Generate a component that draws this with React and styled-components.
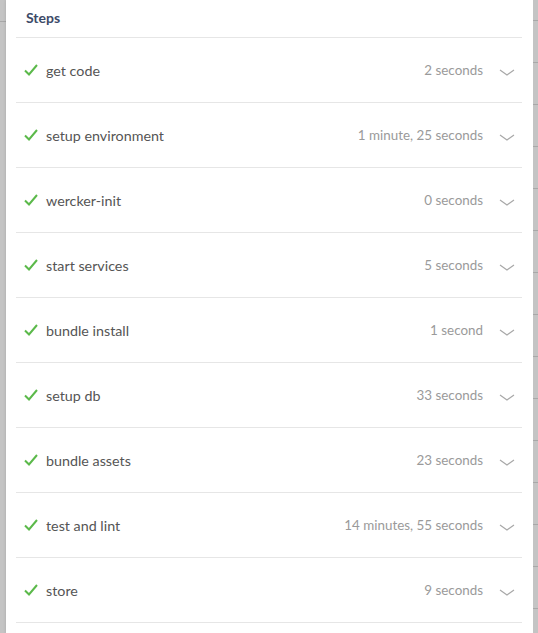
import React from "react";
import styled, { createGlobalStyle } from "styled-components";

const GlobalStyle = createGlobalStyle`
  html, body {
    margin: 0;
    padding: 0;
    background: #c4c4c4;
    font-family: Lato, "Open Sans", "Liberation Sans", sans-serif;
  }
`;

const Page = styled.div`
  display: flex;
  width: 538px;
  height: 633px;
  overflow: hidden;
  background: #c2c2c2;
`;

const SideStrip = styled.div`
  width: ${(p) => p.width}px;
  flex-shrink: 0;
  background-color: #c4c4c4;
  background-image: ${(p) =>
    p.lines
      ? "repeating-linear-gradient(to bottom, transparent 0 20px, #a8a8a8 20px 21px, transparent 21px 42px)"
      : "linear-gradient(to bottom, transparent 0 21px, #a8a8a8 21px 22px, transparent 22px)"};
`;

const Panel = styled.div`
  flex: 1;
  background: #fff;
  padding: 0 11px 0 10px;
  box-shadow: 0 0 3px rgba(0, 0, 0, 0.15);
`;

const Header = styled.h2`
  margin: 0;
  height: 38px;
  box-sizing: border-box;
  padding: 9px 0 0 10px;
  font-size: 14px;
  font-weight: 700;
  color: #3c4a68;
  border-bottom: 1px solid #e6e6e6;
`;

const Row = styled.div`
  display: flex;
  align-items: center;
  height: 65px;
  box-sizing: border-box;
  padding: 0 7px 0 8px;
  border-bottom: 1px solid #e6e6e6;
`;

const Name = styled.span`
  flex: 1;
  margin-left: 8px;
  font-size: 14.3px;
  color: #555;
`;

const Duration = styled.span`
  font-size: 13.4px;
  color: #9a9a9a;
  margin-right: 16px;
`;

const ChevronWrap = styled.span`
  display: flex;
  margin-top: 5px;
`;

const Check = () => (
  <svg width="14" height="12" viewBox="0 0 14 12">
    <path d="M1 6.5 L5 10.5 L13 1" fill="none" stroke="#5bb94a" strokeWidth="2" />
  </svg>
);

const Chevron = () => (
  <ChevronWrap>
    <svg width="16" height="8" viewBox="0 0 16 8">
      <path d="M1 1 L8 6 L15 1" fill="none" stroke="#a8a8a8" strokeWidth="1.2" />
    </svg>
  </ChevronWrap>
);

const steps = [
  ["get code", "2 seconds"],
  ["setup environment", "1 minute, 25 seconds"],
  ["wercker-init", "0 seconds"],
  ["start services", "5 seconds"],
  ["bundle install", "1 second"],
  ["setup db", "33 seconds"],
  ["bundle assets", "23 seconds"],
  ["test and lint", "14 minutes, 55 seconds"],
  ["store", "9 seconds"],
];

export default function App() {
  return (
    <>
      <GlobalStyle />
      <Page>
        <SideStrip width={6} />
        <Panel>
          <Header>Steps</Header>
          {steps.map(([name, time]) => (
            <Row key={name}>
              <Check />
              <Name>{name}</Name>
              <Duration>{time}</Duration>
              <Chevron />
            </Row>
          ))}
        </Panel>
        <SideStrip width={5} lines />
      </Page>
    </>
  );
}
